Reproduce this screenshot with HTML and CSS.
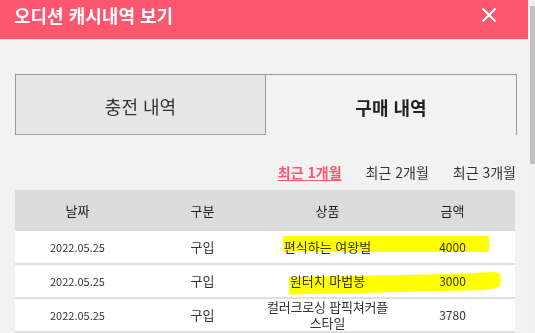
FILE: index.html
```html
<!DOCTYPE html>
<html lang="ko">
<head>
<meta charset="utf-8">
<title>오디션 캐시내역 보기</title>
<link rel="stylesheet" href="styles.css">
</head>
<body>
<div class="page">
  <header class="header">
    <h1 class="title">오디션 캐시내역 보기</h1>
    <svg class="close" width="16" height="16" viewBox="0 0 16 16"><path d="M1.5 1.5 L14.5 14.5 M14.5 1.5 L1.5 14.5" stroke="#fff" stroke-width="2.2" fill="none"/></svg>
  </header>
  <main class="content">
    <div class="tabs">
      <div class="tab">충전 내역</div>
      <div class="tab active">구매 내역</div>
    </div>
    <div class="filters">
      <span class="filter on">최근 1개월</span>
      <span class="filter">최근 2개월</span>
      <span class="filter">최근 3개월</span>
    </div>
    <div class="table-wrap">
      <table class="list">
        <thead>
          <tr><th>날짜</th><th>구분</th><th>상품</th><th>금액</th></tr>
        </thead>
        <tbody>
          <tr><td class="date">2022.05.25</td><td>구입</td><td>편식하는 여왕벌</td><td class="num">4000</td></tr>
          <tr><td class="date">2022.05.25</td><td>구입</td><td>원터치 마법봉</td><td class="num">3000</td></tr>
          <tr><td class="date">2022.05.25</td><td>구입</td><td class="wrap">컬러크로싱 팝픽쳐커플 스타일</td><td class="num">3780</td></tr>
        </tbody>
      </table>
      <svg class="marker" width="500" height="140" viewBox="0 0 500 140">
        <path d="M268 46 L474 46 L474 62 L268 62 Z" fill="#ffff00"/>
        <path d="M274 87 L440 84 L478 82 Q487 82 486 88 L485 97 L470 100 L300 104 L274 104.5 Z" fill="#ffff00"/>
      </svg>
    </div>
  </main>
</div>
<div class="scrollbar"><div class="thumb"></div></div>
</body>
</html>
```
FILE: styles.css
```css
html, body {
  margin: 0;
  padding: 0;
  height: 100%;
}
body {
  display: flex;
  overflow: hidden;
  font-family: "Noto Sans CJK KR", "Noto Sans", sans-serif;
  color: #333;
  background: #f2f2f2;
}
.page {
  flex: 1;
  min-width: 0;
  background: #f2f2f2;
}
.scrollbar {
  width: 7px;
  background: #f1f1f1;
  padding-top: 6px;
  display: flex;
  justify-content: flex-end;
}
.thumb {
  width: 5px;
  height: 158px;
  background: #c1c1c1;
}
.header {
  height: 39px;
  background: #ff566f;
  display: flex;
  justify-content: space-between;
  align-items: flex-start;
  padding: 0 31px 0 14px;
}
.title {
  margin: 3px 0 0;
  font-size: 18px;
  line-height: 24px;
  font-weight: 700;
  color: #fff;
}
.close {
  margin-top: 7px;
}
.content {
  padding: 35px 11px 0 15px;
}
.tabs {
  display: grid;
  grid-template-columns: 1fr 1fr;
  height: 61px;
}
.tab {
  display: flex;
  align-items: center;
  justify-content: center;
  font-size: 18px;
  padding-top: 3px;
  color: #333;
}
.tab:first-child {
  background: #e6e6e6;
  border: 1px solid #999;
}
.tab.active {
  border-top: 1px solid #999;
  border-right: 1px solid #999;
  font-weight: 700;
  color: #222;
}
.filters {
  display: flex;
  justify-content: flex-end;
  gap: 24px;
  margin-top: 27px;
  padding-right: 1px;
  font-size: 14px;
  line-height: 20px;
  color: #333;
}
.filter.on {
  color: #ff566f;
  font-weight: 700;
  text-decoration: underline;
  text-underline-offset: 2px;
}
.table-wrap {
  position: relative;
  margin-top: 8px;
  width: 500px;
}
.list {
  width: 500px;
  border-collapse: collapse;
  table-layout: fixed;
  background: #fff;
}
.list th {
  height: 41px;
  padding: 0;
  background: #dcdcdc;
  font-size: 13px;
  font-weight: 400;
  color: #222;
}
.list td {
  height: 32px;
  padding: 0 4px;
  text-align: center;
  font-size: 13px;
  line-height: 16px;
  border-bottom: 2px solid #e0e0e0;
}
.list td.date {
  font-size: 11px;
}
.list td.num {
  font-size: 12px;
}
.list td.wrap {
  padding: 0;
  letter-spacing: -0.2px;
}
.marker {
  position: absolute;
  left: 0;
  top: 0;
  mix-blend-mode: multiply;
  pointer-events: none;
}
```
